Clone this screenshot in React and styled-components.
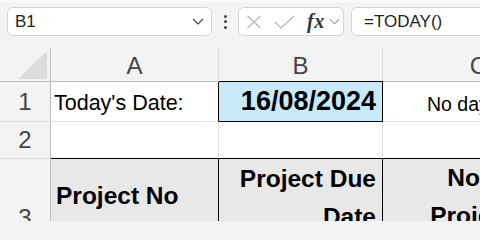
import React from "react";
import styled, { createGlobalStyle } from "styled-components";

const GlobalStyle = createGlobalStyle`
  * { box-sizing: border-box; }
  body {
    margin: 0;
    background: #f3f3f3;
    font-family: "Liberation Sans", Arial, sans-serif;
    overflow: hidden;
  }
`;

const Page = styled.div`
  width: 480px;
  height: 221px;
  overflow: hidden;
  background: #f3f3f3;
`;

const Toolbar = styled.div`
  display: flex;
  align-items: flex-start;
  height: 48px;
  padding: 5px 0 0 7px;
  border-top: 2px solid #fafafa;
  overflow: hidden;
`;

const Box = styled.div`
  display: flex;
  align-items: center;
  height: 29px;
  background: #fff;
  border: 1px solid #d4d4d4;
  border-radius: 6px;
  flex-shrink: 0;
`;

const NameBox = styled(Box)`
  width: 205px;
  padding: 0 7px 0 7px;
  justify-content: space-between;
  font-size: 17px;
  color: #222;
`;

const Dots = styled.div`
  width: 26px;
  height: 29px;
  flex-shrink: 0;
  display: flex;
  flex-direction: column;
  align-items: center;
  justify-content: center;
  gap: 2.5px;

  span {
    width: 3px;
    height: 3px;
    border-radius: 50%;
    background: #444;
  }
`;

const FxBox = styled(Box)`
  width: 106px;
  padding-left: 7px;
`;

const Fx = styled.span`
  font-family: "Liberation Serif", "Times New Roman", serif;
  font-style: italic;
  font-weight: bold;
  font-size: 20px;
  color: #333;
  margin: 0 4px 0 12px;
  letter-spacing: 0.5px;
`;

const FormulaBox = styled(Box)`
  width: 160px;
  margin-left: 7px;
  padding-left: 12px;
  font-size: 17px;
  color: #222;
`;

const Sheet = styled.div`
  display: grid;
  grid-template-columns: 51px 168px 164px 192px;
  grid-template-rows: 34px 40px 37px 118px;
`;

const Corner = styled.div`
  border-right: 1px solid #bdbdbd;
  border-bottom: 1px solid #bdbdbd;
`;

const ColHead = styled.div`
  display: flex;
  align-items: center;
  justify-content: center;
  font-size: 24px;
  color: #444;
  border-bottom: 1px solid #bdbdbd;
  border-right: 1px solid #dadada;
  padding-top: 2px;
`;

const RowHead = styled.div`
  display: flex;
  align-items: center;
  justify-content: center;
  font-size: 24px;
  color: #444;
  border-right: 1px solid #bdbdbd;
  border-bottom: 1px solid #dedede;
`;

const Cell = styled.div`
  display: flex;
  overflow: hidden;
  white-space: nowrap;
  background: ${(p) => p.$bg || "#fff"};
  border-right: 1px solid ${(p) => (p.$rb ? "#000" : "#e1e1e1")};
  border-bottom: 1px solid ${(p) => (p.$bb ? "#000" : "#e1e1e1")};
  box-shadow: ${(p) => (p.$tb ? "inset 0 1px 0 #000" : "none")};
  margin-top: ${(p) => (p.$tb ? "-1px" : "0")};
  color: #000;
`;

const LabelCell = styled(Cell)`
  align-items: flex-end;
  padding: 0 0 7px 3px;
  font-size: 21.5px;
  line-height: 1;
`;

const DateCell = styled(Cell)`
  align-items: flex-end;
  justify-content: flex-end;
  padding: 0 6px 6px 0;
  font-size: 27px;
  font-weight: bold;
  line-height: 1;
`;

const NoteCell = styled(Cell)`
  align-items: flex-end;
  justify-content: center;
  padding-bottom: 7px;
  font-size: 19.5px;
  line-height: 1;
`;

const HeaderCell = styled(Cell)`
  align-items: flex-start;
  justify-content: ${(p) => p.$align || "flex-start"};
  text-align: ${(p) => p.$text || "left"};
  white-space: normal;
  padding: ${(p) => p.$pad || "1px 6px 0 5px"};
  font-size: 24.5px;
  font-weight: bold;
  line-height: 38px;
`;

const CrossIcon = () => (
  <svg width="16" height="14" viewBox="0 0 16 14">
    <path d="M1.5 1 L14.5 13 M14.5 1 L1.5 13" stroke="#b5b5b5" strokeWidth="1.1" fill="none" />
  </svg>
);

const CheckIcon = () => (
  <svg width="21" height="14" viewBox="0 0 21 14" style={{ marginLeft: 12 }}>
    <path d="M1 7 L7 13 L20 1" stroke="#b5b5b5" strokeWidth="1.1" fill="none" />
  </svg>
);

const Chevron = ({ color = "#444", w = 12 }) => (
  <svg width={w} height="7" viewBox="0 0 12 7">
    <path d="M1 1 L6 6 L11 1" stroke={color} strokeWidth="1.2" fill="none" />
  </svg>
);

const CornerMark = () => (
  <svg width="50" height="34" viewBox="0 0 50 34">
    <polygon points="18,31 47,31 47,3" fill="#dcdcdc" />
  </svg>
);

export default function App() {
  return (
    <Page>
      <GlobalStyle />
      <Toolbar>
        <NameBox>
          <span>B1</span>
          <Chevron />
        </NameBox>
        <Dots>
          <span />
          <span />
          <span />
        </Dots>
        <FxBox>
          <CrossIcon />
          <CheckIcon />
          <Fx>fx</Fx>
          <Chevron color="#9a9a9a" w={11} />
        </FxBox>
        <FormulaBox>=TODAY()</FormulaBox>
      </Toolbar>

      <Sheet>
        <Corner>
          <CornerMark />
        </Corner>
        <ColHead>A</ColHead>
        <ColHead>B</ColHead>
        <ColHead>C</ColHead>

        <RowHead>1</RowHead>
        <LabelCell $rb>Today's Date:</LabelCell>
        <DateCell $bg="#c9e8f8" $rb $bb $tb>16/08/2024</DateCell>
        <NoteCell>No days left</NoteCell>

        <RowHead>2</RowHead>
        <Cell $bb />
        <Cell $bb />
        <Cell $bb />

        <RowHead>3</RowHead>
        <HeaderCell $bg="#e8e8e8" $rb $pad="18px 6px 0 5px">
          Project No
        </HeaderCell>
        <HeaderCell $bg="#e8e8e8" $rb $align="flex-end" $text="right">
          Project Due Date
        </HeaderCell>
        <HeaderCell $bg="#e8e8e8" $align="center" $text="center" $pad="0 6px">
          No of
          <br />
          Projects
        </HeaderCell>
      </Sheet>
    </Page>
  );
}
